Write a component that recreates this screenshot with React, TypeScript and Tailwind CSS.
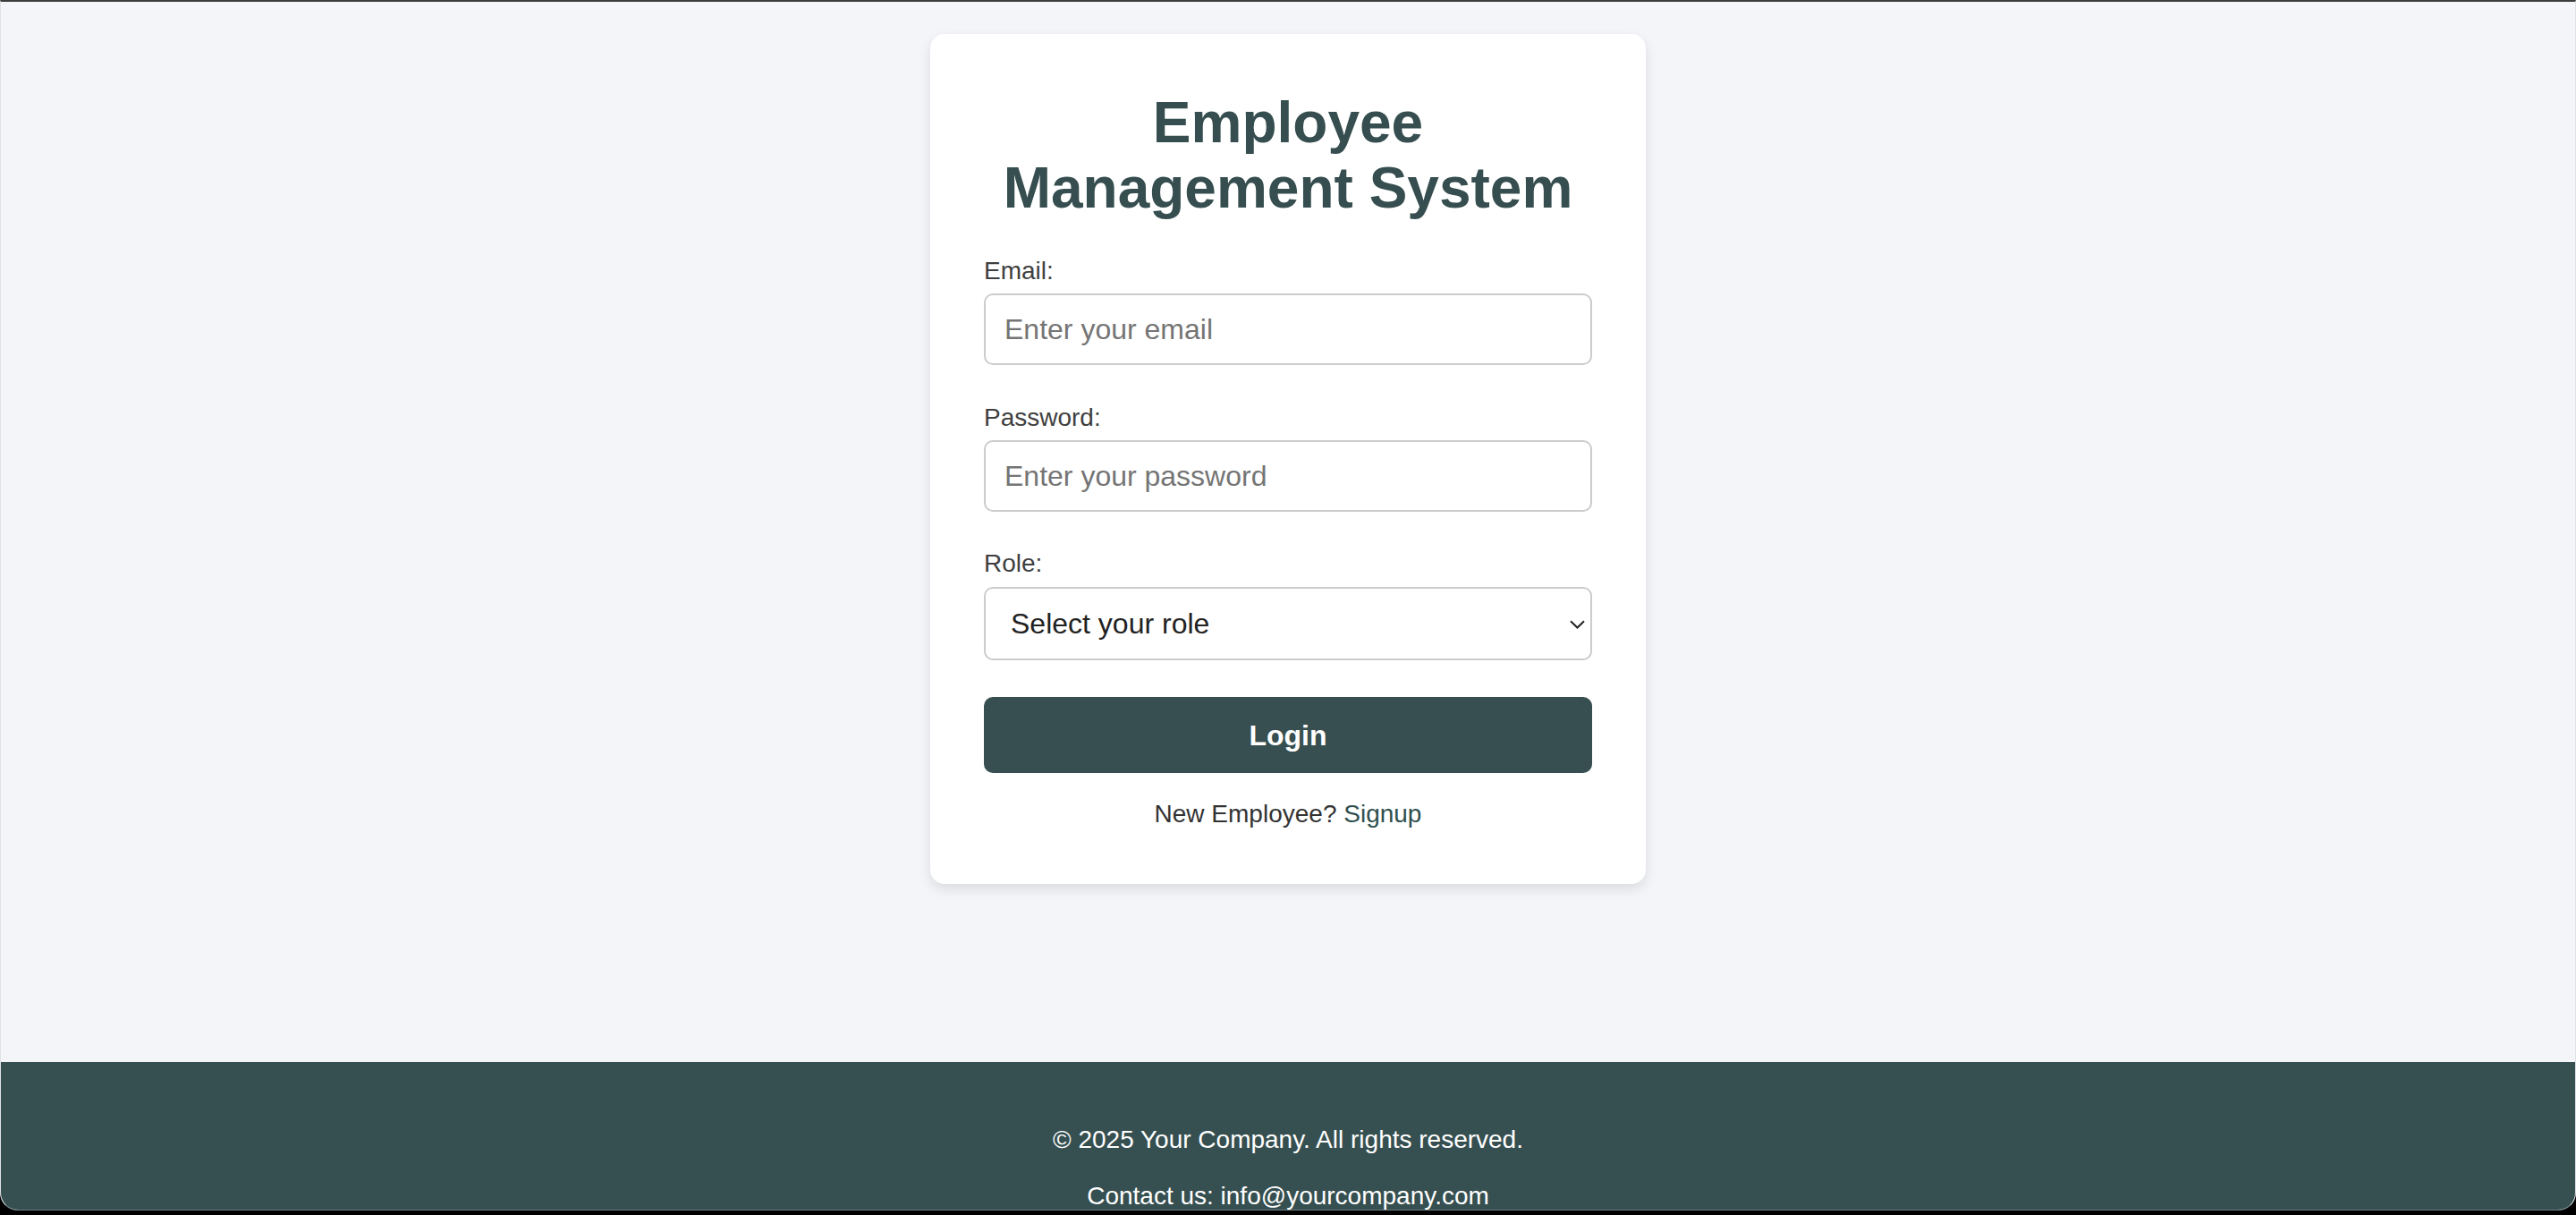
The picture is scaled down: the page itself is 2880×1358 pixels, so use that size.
import React from "react";

export default function App() {
  return (
    <div className="w-[2880px] h-[1358px] bg-black" style={{ fontFamily: '"Liberation Sans", Arial, sans-serif' }}>
      <div className="h-[1353px] flex flex-col overflow-hidden rounded-b-[20px] border-t-2 border-t-[#3c3c3c] border-x border-b border-x-[#dfe1e6] border-b-[#6f7f80] bg-[#f4f5f9]">
        <main className="flex-1 flex justify-center">
          <div className="mt-[36px] self-start w-[800px] bg-white rounded-[16px] shadow-[0_6px_14px_rgba(0,0,0,0.10)] px-[60px] pt-[63px] pb-[62px]">
            <h1 className="text-center text-[64px] leading-[73px] font-bold text-[#364e4f]">
              Employee Management System
            </h1>
            <form className="mt-[40px] flex flex-col" onSubmit={(e) => e.preventDefault()}>
              <label className="text-[28px] leading-[32px] text-[#3f3f3f]">Email:</label>
              <input
                type="email"
                placeholder="Enter your email"
                className="mt-[9px] h-[80px] w-full rounded-[10px] border-2 border-[#cccccc] px-[21px] text-[32px] text-[#222] placeholder:text-[#757575] outline-none"
              />
              <label className="mt-[43px] text-[28px] leading-[32px] text-[#3f3f3f]">Password:</label>
              <input
                type="password"
                placeholder="Enter your password"
                className="mt-[9px] h-[80px] w-full rounded-[10px] border-2 border-[#cccccc] px-[21px] text-[32px] text-[#222] placeholder:text-[#757575] outline-none"
              />
              <label className="mt-[42px] text-[28px] leading-[32px] text-[#3f3f3f]">Role:</label>
              <div className="relative mt-[10px]">
                <select
                  defaultValue=""
                  className="appearance-none h-[82px] w-full rounded-[10px] border-2 border-[#cccccc] bg-white pl-[28px] pr-[40px] text-[32px] text-[#222] outline-none"
                >
                  <option value="" disabled>
                    Select your role
                  </option>
                  <option value="employee">Employee</option>
                  <option value="admin">Admin</option>
                </select>
                <svg
                  className="absolute right-[8px] top-[37px] pointer-events-none"
                  width="17"
                  height="10"
                  viewBox="0 0 17 10"
                  fill="none"
                >
                  <path d="M1 1.2 L8.5 8.5 L16 1.2" stroke="#222" strokeWidth="2" />
                </svg>
              </div>
              <button
                type="submit"
                className="mt-[41px] h-[85px] w-full rounded-[10px] bg-[#374f50] text-white text-[32px] font-bold"
              >
                Login
              </button>
              <p className="mt-[30px] text-center text-[28px] leading-[32px] text-[#333]">
                New Employee?{" "}
                <a href="#" className="text-[#2f4f4f]">
                  Signup
                </a>
              </p>
            </form>
          </div>
        </main>
        <footer className="h-[165px] shrink-0 bg-[#364f50] text-white text-center text-[28px] leading-[32px] pt-[71px]">
          <p>© 2025 Your Company. All rights reserved.</p>
          <p className="mt-[31px]">Contact us: info@yourcompany.com</p>
        </footer>
      </div>
    </div>
  );
}
